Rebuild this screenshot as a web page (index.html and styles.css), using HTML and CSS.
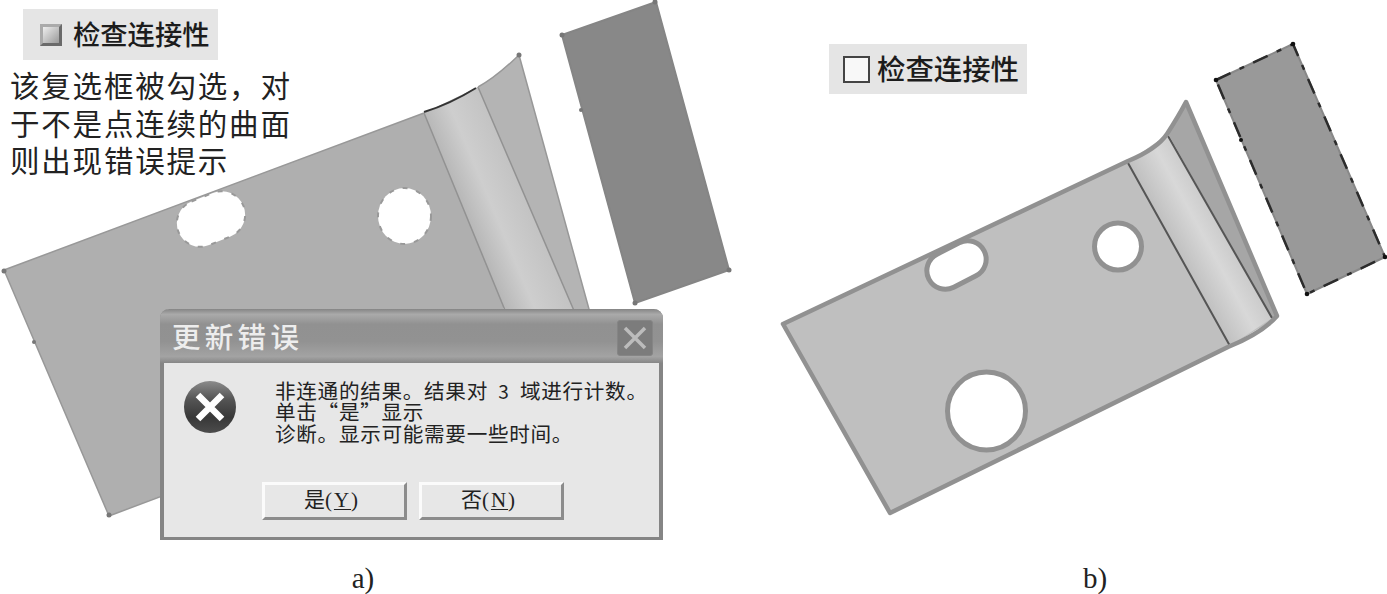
FILE: index.html
```
<!DOCTYPE html>
<html lang="zh-CN">
<head>
  <meta charset="UTF-8" />
  <meta name="viewport" content="width=device-width, initial-scale=1" />
  <title>检查连接性</title>
  <link rel="stylesheet" href="styles.css">
</head>
<body>

  <!-- Modelos de superfície atrás das legendas -->
  <svg class="drawing" viewBox="0 0 1387 594" aria-hidden="true">
    <defs>
      <linearGradient id="bendA" gradientUnits="userSpaceOnUse" x1="458" y1="212" x2="520" y2="186">
        <stop offset="0" stop-color="#b2b2b2" />
        <stop offset=".5" stop-color="#cecece" />
        <stop offset="1" stop-color="#c3c3c3" />
      </linearGradient>
      <linearGradient id="bendB" gradientUnits="userSpaceOnUse" x1="1178" y1="252" x2="1222" y2="228">
        <stop offset="0" stop-color="#c0c0c0" />
        <stop offset=".6" stop-color="#d8d8d8" />
        <stop offset="1" stop-color="#cbcbcb" />
      </linearGradient>
    </defs>

    <g class="model-a">
      <path class="plate" d="M4 270 L424 113 L478 87 L505 320 L570 338 L109 516 Z" />
      <path class="flange" d="M478 87 Q495 78 519 55 L592 320 L577 320 Z" />
      <path class="bend" d="M424 113 Q450 106 478 87 L578 320 L509 320 Z" />
      <path class="seam" d="M424 113 L509 320 M478 87 L578 320" />
      <path class="edge" d="M109 516 L4 270 L424 113 M478 87 Q495 78 519 55 L592 320 M109 516 L162 496" />
      <path class="edge-dark" d="M424 112 Q450 104 476 88" />
      <rect class="hole" x="176" y="195.5" width="70" height="47" rx="23.5" transform="rotate(-22 211 219)" />
      <ellipse class="hole" cx="404.5" cy="216" rx="26.5" ry="28" />
      <path class="slab" d="M562 35 L656 2 L729 270 L635 303 Z" />
      <g class="points">
        <circle cx="4" cy="271" r="2.5" /><circle cx="34" cy="342" r="2" /><circle cx="109" cy="515" r="2.5" />
        <circle cx="519" cy="55" r="2.5" /><circle cx="562" cy="35" r="2.5" /><circle cx="655" cy="2" r="2.5" />
        <circle cx="729" cy="270" r="2.5" /><circle cx="635" cy="303" r="2.5" /><circle cx="581" cy="110" r="2" />
      </g>
    </g>

    <g class="model-b">
      <path class="plate" d="M783 324 L1128 162 L1168 134 L1276 318 L1230 346 L890 513 Z" />
      <path class="flange" d="M1168 134 L1186 102 L1277 315 L1272 318 Z" />
      <path class="bend" d="M1128 162 Q1155 152 1168 134 L1272 318 L1230 346 Z" />
      <path class="seam" d="M1128 163 L1230 346 M1168 136 L1272 318" />
      <path class="edge" d="M783 324 L1128 161 Q1157 149 1167 134 Q1178 117 1186 102 L1277 316 Q1262 333 1228 347 L890 513 Z" />
      <rect class="hole" x="925.5" y="246.5" width="62" height="37" rx="18.5" transform="rotate(-27 956.5 265)" />
      <circle class="hole" cx="1118" cy="246.5" r="23.5" />
      <circle class="hole" cx="986.5" cy="411" r="39" />
      <path class="slab" d="M1216 80 L1293 44 L1385 257 L1307 294 Z" />
      <path class="slab-dash" d="M1216 80 L1293 44 L1385 257 L1307 294 Z" />
      <g class="points">
        <circle cx="1216" cy="80" r="2.3" /><circle cx="1293" cy="44" r="2.3" /><circle cx="1385" cy="257" r="2.3" />
        <circle cx="1307" cy="294" r="2.3" /><circle cx="1241" cy="140" r="2" />
      </g>
    </g>
  </svg>

  <main class="figures">
    <figure class="figure figure-a">
      <div class="option">
        <span class="box box-on"></span>
        <span class="label">检查连接性</span>
      </div>
      <p class="note">该复选框被勾选，对<br>于不是点连续的曲面<br>则出现错误提示</p>

      <section class="dialog" role="alertdialog" aria-labelledby="dialogTitle">
        <header class="dialog-title">
          <h1 id="dialogTitle">更新错误</h1>
          <button class="close" type="button" aria-label="关闭">
            <svg viewBox="0 0 24 24"><path d="M2 2 L22 22 M22 2 L2 22" /></svg>
          </button>
        </header>
        <div class="dialog-body">
          <svg class="error-icon" viewBox="0 0 54 54" aria-hidden="true">
            <defs>
              <linearGradient id="ball" x1="0" y1="0" x2="0" y2="1">
                <stop offset="0" stop-color="#8c8c8c" />
                <stop offset=".35" stop-color="#555" />
                <stop offset=".7" stop-color="#383838" />
                <stop offset="1" stop-color="#4c4c4c" />
              </linearGradient>
            </defs>
            <circle cx="27" cy="27" r="26" fill="url(#ball)" />
            <path d="M15 15 L39 39 M39 15 L15 39" stroke="#fff" stroke-width="6.5" />
          </svg>
          <p class="message">非连通的结果。结果对<span class="num">3</span>域进行计数。<br>单击“是”显示<br>诊断。显示可能需要一些时间。</p>
        </div>
        <div class="dialog-buttons">
          <button type="button">是<span class="key">(<u>Y</u>)</span></button>
          <button type="button">否<span class="key">(<u>N</u>)</span></button>
        </div>
      </section>
      <figcaption>a)</figcaption>
    </figure>

    <figure class="figure figure-b">
      <div class="option">
        <span class="box"></span>
        <span class="label">检查连接性</span>
      </div>
      <figcaption>b)</figcaption>
    </figure>
  </main>

</body>
</html>
```
FILE: styles.css
```
*, *::before, *::after {
  box-sizing: border-box;
}

body, html {
  margin: 0; padding: 0; height: 100vh;
  background: #fff;
  font-family: "Noto Sans CJK SC", "Liberation Sans", sans-serif;
  color: #222; overflow: hidden;
}

/* Desenho */
.drawing { position: absolute; top: 0; left: 0; width: 1387px; height: 594px; }
.drawing path { stroke-linejoin: round; }
.hole { fill: #fff; }

.model-a .plate { fill: #afafaf; }
.model-a .flange { fill: #b4b4b4; }
.model-a .bend { fill: url(#bendA); }
.model-a .seam { fill: none; stroke: #929292; stroke-width: 1.5; }
.model-a .edge { fill: none; stroke: #989898; stroke-width: 1.5; }
.model-a .edge-dark { fill: none; stroke: #333; stroke-width: 2; }
.model-a .hole { stroke: #999; stroke-width: 2; stroke-dasharray: 5 9; }
.model-a .slab { fill: #888; stroke: #858585; stroke-width: 2; }
.model-a .points { fill: #777; }

.model-b .plate { fill: #bfbfbf; }
.model-b .flange { fill: #a6a6a6; }
.model-b .bend { fill: url(#bendB); }
.model-b .seam { fill: none; stroke: #555; stroke-width: 2; }
.model-b .edge { fill: none; stroke: #919191; stroke-width: 4.5; }
.model-b .hole { stroke: #919191; stroke-width: 5; }
.model-b .slab { fill: #999; stroke: #888; stroke-width: 2; }
.model-b .slab-dash { fill: none; stroke: #2c2c2c; stroke-width: 2.5; stroke-dasharray: 16 10 5 10; }
.model-b .points { fill: #111; }

/* Colunas */
.figures {
  position: relative;
  display: grid;
  grid-template-columns: 726px 558px;
  column-gap: 103px;
  height: 594px;
}
.figure { margin: 0; display: flex; flex-direction: column; align-items: flex-start; }
.figure-a { padding-top: 9px; }
.figure-b { padding-top: 44px; }
figcaption { margin-top: auto; align-self: center; height: 32px; font: 29px/32px "Liberation Serif", serif; }
.figure-b figcaption { padding-right: 26px; }

.option {
  display: flex; align-items: center;
  background: #e5e5e5;
  color: #1c1c1c;
  font-weight: 500;
  white-space: nowrap;
}
.label { padding-bottom: 4px; }
.figure-a .option { width: 195px; height: 51px; margin-left: 23px; padding-left: 17px; gap: 11px; font-size: 27.3px; }
.figure-b .option { width: 198px; height: 50px; padding-left: 14px; gap: 7px; font-size: 28.4px; }
.box { width: 27px; height: 27px; border: 2px solid #444; background: #f8f8f8; }
.box-on {
  width: 22px; height: 22px;
  border: 3px solid;
  border-color: #aaa #6a6a6a #6a6a6a #aaa;
  background: linear-gradient(135deg, #eee, #999);
}

.note { margin: 6px 0 0 10px; font-size: 29.5px; line-height: 37.5px; letter-spacing: 1.8px; white-space: nowrap; }

/* Caixa de erro */
.dialog {
  width: 503px; height: 231px;
  margin: 130px 0 0 160px;
  background: #e7e7e7;
  border: 4px solid #858585;
  border-top: 0;
  border-bottom-width: 3px;
  border-radius: 9px 9px 0 0;
}
.dialog-title {
  display: flex; align-items: center; justify-content: space-between;
  height: 54px;
  margin: 0 -4px;
  padding: 0 10px 0 12px;
  border-radius: 9px 9px 0 0;
  background: linear-gradient(#858585, #aaa 10%, #919191 28%, #929292 60%, #a3a3a3 88%, #868686);
}
.dialog-title h1 { margin: 0; font-size: 28.5px; font-weight: 500; line-height: 54px; letter-spacing: 4.3px; color: #ededed; }
.close { display: flex; align-items: center; justify-content: center; width: 36px; height: 36px; margin-top: 5px; padding: 0; border: 1px solid #858585; border-radius: 3px; background: #7c7c7c; }
.close svg { width: 24px; height: 24px; fill: none; stroke: #bcbcbc; stroke-width: 3.5; }

.dialog-body { display: flex; height: 119px; padding: 17px 0 0 19px; }
.error-icon { width: 54px; height: 54px; flex: none; }
.message { margin: 0 0 0 38px; font-size: 20.6px; line-height: 21.6px; letter-spacing: .7px; white-space: nowrap; }
.num { display: inline-block; width: 32px; text-align: center; font-size: 19px; }

.dialog-buttons { display: flex; gap: 12px; padding-left: 98px; }
.dialog-buttons button {
  width: 145px; height: 38px;
  padding: 0 5px 5px 0;
  font: 21px/27px "Noto Sans CJK SC", sans-serif;
  color: #222;
  background: #e7e7e7;
  border: 3px solid;
  border-color: #fbfbfb #8c8c8c #8c8c8c #fbfbfb;
}
.key { font-family: "Liberation Serif", serif; letter-spacing: 2px; }
.key u { text-decoration-thickness: 1px; text-underline-offset: 2px; }
```
